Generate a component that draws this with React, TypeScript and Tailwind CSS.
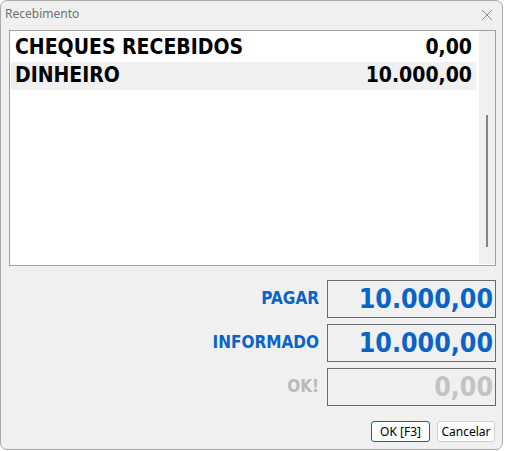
import React from "react";

const rows = [
    { label: "CHEQUES RECEBIDOS", value: "0,00", alt: false },
    { label: "DINHEIRO", value: "10.000,00", alt: true },
];

const totals = [
    { label: "PAGAR", value: "10.000,00", muted: false },
    { label: "INFORMADO", value: "10.000,00", muted: false },
    { label: "OK!", value: "0,00", muted: true },
];

const boldFont = { fontFamily: '"DejaVu Sans Condensed", "DejaVu Sans", sans-serif' };

export default function App() {
    return (
        <div className="w-[505px] h-[451px] bg-white overflow-hidden">
            <div className="w-[503px] h-[450px] bg-[#f0f0f0] border border-[#a9a9a9] rounded-[7px] flex flex-col">
                {/* Title bar */}
                <div
                    className="h-[29px] flex items-center justify-between pl-[4px] pr-[9px] text-[12px] text-[#707070]"
                    style={{ fontFamily: '"Segoe UI", "Noto Sans", sans-serif' }}
                >
                    <span className="-mt-[3px]">Recebimento</span>
                    <svg width="12" height="12" viewBox="0 0 12 12" className="-mt-[2px]">
                        <path d="M1 1 L11 11 M11 1 L1 11" stroke="#8a8a8a" strokeWidth="1" fill="none" />
                    </svg>
                </div>

                {/* List */}
                <div className="ml-[8px] w-[487px] h-[236px] bg-white border border-[#a0a0a0] flex">
                    <div className="flex-1 pt-[3px] pl-[1px] pr-[3px]">
                        {rows.map((r) => (
                            <div
                                key={r.label}
                                className={`h-[28px] flex items-center justify-between pl-[4px] pr-[4px] text-[21px] font-bold text-black ${r.alt ? "bg-[#f0f0f0]" : ""}`}
                                style={boldFont}
                            >
                                <span>{r.label}</span>
                                <span>{r.value}</span>
                            </div>
                        ))}
                    </div>
                    <div className="w-[16px] mb-[1px] bg-[#f0f0f0] flex justify-center pt-[84px]">
                        <div className="w-[2px] h-[132px] bg-[#858585]" />
                    </div>
                </div>

                {/* Totals */}
                <div className="mt-[14px] w-[495px] flex flex-col items-end gap-[6px]">
                    {totals.map((t) => (
                        <div key={t.label} className="flex items-center gap-[8px]">
                            <span
                                className={`text-[17px] font-bold ${t.muted ? "text-[#b9b9b9]" : "text-[#0a63c6]"}`}
                                style={boldFont}
                            >
                                {t.label}
                            </span>
                            <div
                                className={`w-[169px] h-[38px] border border-[#6a6a6a] flex items-center justify-end pr-[2px] text-[26.5px] font-bold ${t.muted ? "text-[#c3c3c3]" : "text-[#0a63c6]"}`}
                                style={boldFont}
                            >
                                {t.value}
                            </div>
                        </div>
                    ))}
                </div>

                {/* Buttons */}
                <div
                    className="mt-[15px] w-[494px] flex justify-end gap-[7px] text-[12px] text-black"
                    style={{ fontFamily: '"Segoe UI", "Noto Sans", sans-serif' }}
                >
                    <button className="w-[59px] h-[21px] bg-[#fdfdfd] border border-[#0067c0] rounded-[3px] leading-none">
                        OK [F3]
                    </button>
                    <button className="w-[58px] h-[21px] bg-[#fdfdfd] border border-[#d0d0d0] rounded-[3px] leading-none">
                        Cancelar
                    </button>
                </div>
            </div>
        </div>
    );
}
